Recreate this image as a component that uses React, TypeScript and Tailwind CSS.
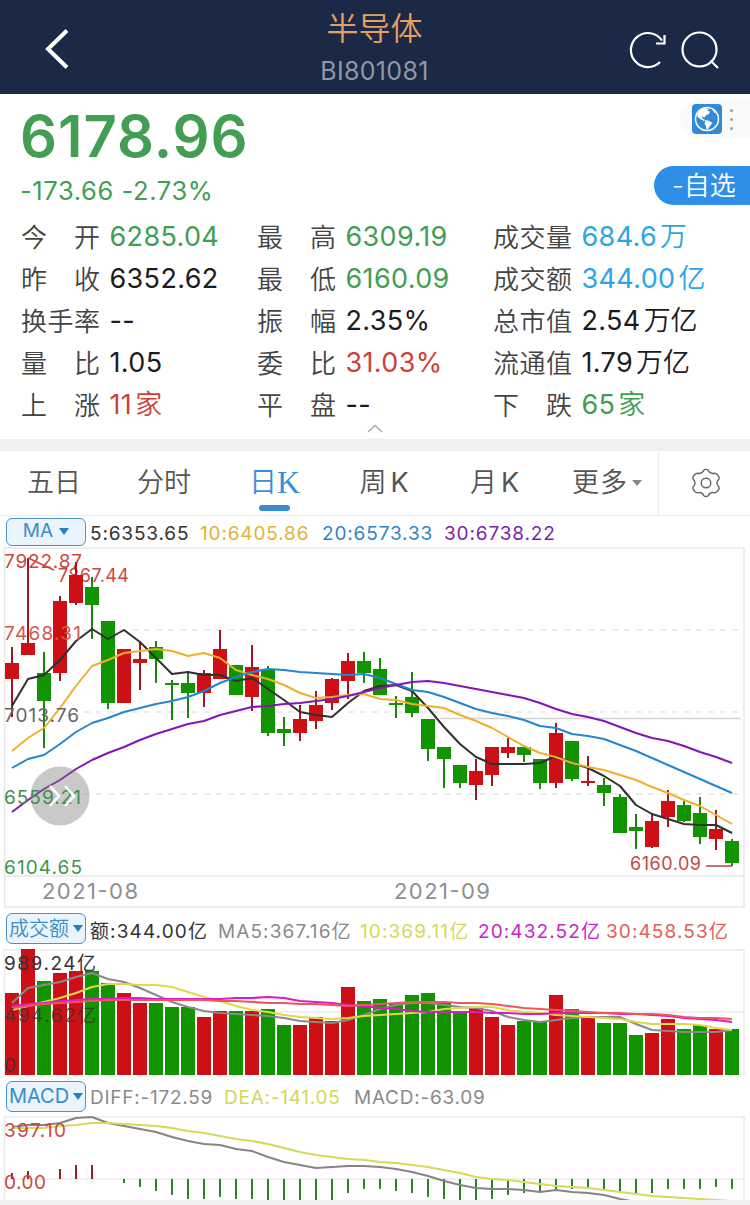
import React from 'react'

const RED = '#cd0f16'
const GREEN = '#129400'
const FONT = "Inter, 'Noto Sans CJK SC', sans-serif"

// high, body top, body bottom, low, direction (1 = up)
const candles: number[][] = [
  [647, 663, 679, 717, 1], [558, 643, 655, 655, 1], [652, 673, 701, 748, 0], [596, 601, 673, 681, 1],
  [562, 575, 603, 605, 1], [577, 587, 605, 639, 0], [621, 621, 703, 709, 0], [649, 649, 703, 703, 1],
  [641, 659, 663, 690, 1], [641, 647, 659, 683, 0], [680, 683, 685, 720, 0], [673, 683, 693, 718, 0],
  [670, 673, 693, 707, 1], [630, 649, 679, 679, 1], [665, 665, 695, 695, 0], [645, 667, 697, 711, 1],
  [666, 670, 733, 736, 0], [717, 729, 733, 746, 0], [705, 719, 733, 741, 1], [691, 705, 721, 729, 1],
  [678, 679, 703, 710, 1], [653, 661, 681, 699, 1], [652, 661, 673, 683, 0], [658, 669, 695, 695, 0],
  [696, 703, 705, 718, 0], [672, 697, 713, 717, 0], [719, 719, 749, 761, 0], [747, 747, 759, 788, 0],
  [765, 765, 783, 788, 0], [759, 771, 785, 800, 1], [747, 747, 775, 786, 1], [738, 747, 753, 758, 1],
  [746, 747, 755, 762, 0], [759, 759, 783, 789, 0], [723, 733, 783, 788, 1], [741, 741, 779, 781, 0],
  [756, 781, 783, 786, 1], [778, 785, 793, 806, 0], [794, 797, 833, 833, 0], [814, 827, 831, 849, 0],
  [814, 821, 847, 848, 1], [790, 801, 817, 827, 1], [801, 805, 821, 822, 0], [797, 813, 837, 844, 0],
  [810, 829, 839, 850, 1], [839, 841, 863, 866, 0],
]

const ma5 = [706, 679, 675, 660, 641, 629, 639, 630, 642, 658, 674, 672, 675, 675, 681, 678, 689, 700, 712, 715, 717, 703, 691, 686, 685, 691, 708, 727, 744, 757, 764, 764, 764, 763, 756, 763, 768, 776, 786, 805, 814, 819, 824, 825, 825, 833]
const ma10 = [751, 738, 728, 708, 686, 666, 660, 653, 651, 649, 651, 656, 653, 658, 670, 675, 679, 685, 693, 698, 697, 695, 694, 699, 700, 704, 706, 708, 715, 721, 728, 737, 746, 753, 757, 763, 767, 770, 775, 780, 787, 793, 800, 806, 815, 824]
const ma20 = [768, 759, 755, 744, 732, 723, 718, 712, 708, 704, 701, 697, 691, 683, 677, 672, 669, 670, 672, 673, 674, 675, 674, 678, 684, 690, 692, 697, 703, 709, 713, 716, 720, 726, 728, 734, 736, 739, 745, 751, 758, 765, 772, 779, 786, 793]
const ma30 = [812, 800, 789, 780, 769, 760, 753, 747, 740, 734, 729, 724, 721, 715, 711, 707, 706, 704, 703, 701, 699, 696, 692, 688, 685, 682, 681, 683, 686, 689, 692, 695, 698, 703, 709, 714, 717, 721, 727, 733, 738, 741, 746, 752, 757, 763]

const volume = [993, 949, 981, 973, 971, 971, 983, 993, 1003, 1003, 1007, 1007, 1017, 1011, 1011, 1011, 1009, 1025, 1025, 1017, 1021, 987, 1001, 999, 1003, 995, 993, 1003, 1011, 1007, 1017, 1025, 1021, 1021, 995, 1009, 1017, 1023, 1023, 1035, 1033, 1019, 1029, 1025, 1029, 1029]
const volUp = '1101100110001101001111000000011100101000110010'
const vol5 = [1003, 988, 985, 982, 977, 973, 979, 982, 988, 995, 1002, 1007, 1011, 1013, 1014, 1015, 1016, 1018, 1021, 1022, 1023, 1020, 1015, 1009, 1005, 1003, 1003, 1005, 1007, 1008, 1011, 1017, 1020, 1022, 1020, 1018, 1017, 1017, 1017, 1024, 1030, 1031, 1032, 1032, 1032, 1030]
const vol10 = [1010, 1006, 1002, 998, 993, 987, 984, 984, 985, 985, 987, 992, 997, 1001, 1006, 1010, 1012, 1015, 1017, 1018, 1019, 1018, 1016, 1015, 1014, 1013, 1012, 1009, 1008, 1007, 1007, 1010, 1012, 1013, 1015, 1016, 1017, 1018, 1019, 1022, 1024, 1024, 1024, 1025, 1028, 1030]
const vol20 = [1006, 1004, 1003, 1001, 1000, 999, 999, 998, 998, 999, 999, 999, 999, 999, 998, 998, 997, 998, 1001, 1002, 1003, 1005, 1006, 1008, 1009, 1011, 1012, 1012, 1012, 1012, 1013, 1013, 1014, 1014, 1013, 1013, 1013, 1013, 1014, 1014, 1015, 1016, 1018, 1019, 1020, 1022]
const vol30 = [1008, 1006, 1004, 1003, 1002, 1001, 1000, 1000, 1000, 1000, 1000, 1000, 1000, 1001, 1001, 1002, 1003, 1003, 1004, 1004, 1005, 1006, 1005, 1004, 1003, 1002, 1002, 1002, 1003, 1003, 1004, 1006, 1008, 1009, 1010, 1011, 1012, 1013, 1013, 1014, 1014, 1015, 1017, 1018, 1018, 1019]

const histogram = [1173, 1171, 1179, 1169, 1165, 1165, 1179, 1183, 1187, 1191, 1195, 1199, 1199, 1197, 1199, 1199, 1200, 1200, 1200, 1200, 1200, 1193, 1189, 1189, 1191, 1193, 1197, 1199, 1200, 1200, 1199, 1195, 1193, 1191, 1189, 1189, 1189, 1189, 1191, 1193, 1193, 1189, 1189, 1189, 1187, 1189]
const diff = [1127, 1125, 1125, 1123, 1118, 1117, 1123, 1126, 1129, 1132, 1137, 1141, 1144, 1145, 1149, 1151, 1157, 1162, 1165, 1168, 1167, 1166, 1166, 1167, 1169, 1172, 1176, 1181, 1185, 1188, 1189, 1189, 1190, 1192, 1190, 1192, 1193, 1195, 1199, 1202]
const dea = [1128, 1128, 1128, 1126, 1125, 1123, 1123, 1124, 1125, 1126, 1128, 1131, 1133, 1136, 1139, 1141, 1144, 1148, 1152, 1155, 1157, 1159, 1160, 1162, 1163, 1165, 1167, 1170, 1173, 1177, 1179, 1180, 1182, 1184, 1186, 1187, 1188, 1190, 1192, 1194, 1196, 1197, 1198, 1199, 1200, 1201]

const cx = (i: number) => 12 + i * 16

const Line = ({ data, color, width = 2 }: { data: number[]; color: string; width?: number }) => (
  <polyline
    points={data.map((y, i) => `${cx(i)},${y}`).join(' ')}
    fill="none"
    stroke={color}
    strokeWidth={width}
    strokeLinejoin="round"
  />
)

interface LabelProps {
  x: number
  y: number
  w: number
  color: string
  size?: number
  children: string
}

const Label = ({ x, y, w, color, size = 19, children }: LabelProps) => (
  <text x={x} y={y} textLength={w} fill={color} fontSize={size} fontFamily={FONT}>
    {children}
  </text>
)

interface Quote {
  label: string
  value: string
  tone: string
}

const up = 'text-[#cf3f3a]'
const down = 'text-[#429e52]'
const info = 'text-[#2ba6e2]'
const plain = 'text-[#1c1c1e]'

const quotes: Quote[] = [
  { label: '今开', value: '6285.04', tone: down },
  { label: '最高', value: '6309.19', tone: down },
  { label: '成交量', value: '684.6万', tone: info },
  { label: '昨收', value: '6352.62', tone: plain },
  { label: '最低', value: '6160.09', tone: down },
  { label: '成交额', value: '344.00亿', tone: info },
  { label: '换手率', value: '--', tone: plain },
  { label: '振幅', value: '2.35%', tone: plain },
  { label: '总市值', value: '2.54万亿', tone: plain },
  { label: '量比', value: '1.05', tone: plain },
  { label: '委比', value: '31.03%', tone: up },
  { label: '流通值', value: '1.79万亿', tone: plain },
  { label: '上涨', value: '11家', tone: up },
  { label: '平盘', value: '--', tone: plain },
  { label: '下跌', value: '65家', tone: down },
]

// CJK units sit slightly away from the digits
const Value = ({ text }: { text: string }) => {
  const [, num, unit] = text.match(/^([-\d.%]+)(.*)$/) as RegExpMatchArray
  return (
    <>
      {num}
      {unit && <span className="ml-[3px] text-[27px] font-[350] tracking-normal">{unit}</span>}
    </>
  )
}

const Header = () => (
  <header className="flex h-[94px] items-center justify-between bg-[#1c2946] pr-[30px] pl-[45px]">
    <svg width="26" height="40" viewBox="0 0 26 40" className="mt-1" fill="none" stroke="#fff" strokeWidth="4">
      <path d="M22 1.500 L3 20 L22 38.500" />
    </svg>
    <div className="flex flex-col items-center pt-0.5 pl-[50px]">
      <h1 className="text-[32px] leading-[46px] font-[350] text-[#e5a064]">半导体</h1>
      <p className="text-[25px] leading-[38px] tracking-[0.3px] text-[#8f97a8]">BI801081</p>
    </div>
    <div className="mt-2 flex items-center gap-3">
      <svg width="40" height="40" viewBox="0 0 40 40" fill="none" stroke="#fff" strokeWidth="2.200">
        <path d="M32 31 A17 17 0 1 1 34 9.500" />
        <path d="M36.500 4 V12.500 H28" />
      </svg>
      <svg width="40" height="40" viewBox="0 0 40 40" fill="none" stroke="#fff" strokeWidth="2.200">
        <circle cx="19.500" cy="18.500" r="17" />
        <path d="M30.500 29.500 L38 37" />
      </svg>
    </div>
  </header>
)

const Globe = () => (
  <svg width="30" height="30" viewBox="0 0 30 30">
    <rect width="30" height="30" rx="4" fill="#2f8bd8" />
    <circle cx="15" cy="15" r="11.500" fill="none" stroke="#fff" strokeWidth="1.500" />
    <path
      d="M5 11 L9 5 L14 4 L17 5.500 L15 7 L18 7.500 L17 10 L14.500 11 L12.500 13.500 L10.500 12.500 L10 14 L13 16 L12 17 L8 15 L6 13 Z M13.500 16 L17.500 17 L20.500 19 L18 22 L16 25 L14.500 25.500 L14 22 L12.500 19.500 Z M20 5 L24 8 L22.500 9 Z"
      fill="#fff"
    />
  </svg>
)

const Summary = () => (
  <section className="h-[345px]">
    <div className="flex h-[122px] justify-between">
      <div className="pl-5">
        <div className="mt-[7px] text-[58px] leading-[70px] font-semibold tracking-[0.9px] text-[#429e52]">6178.96</div>
        <div className="mt-[6px] text-[25.5px] leading-[28px] tracking-[0.6px] text-[#429e52]">-173.66 -2.73%</div>
      </div>
      <div className="flex flex-col items-end">
        <div className="mt-[6px] flex h-[38px] w-[70px] items-center gap-2 rounded-l-full bg-[#fafafa] pl-3">
          <Globe />
          <div className="flex flex-col gap-[6px]">
            <i className="size-[3px] rounded-full bg-gray-400" />
            <i className="size-[3px] rounded-full bg-gray-400" />
            <i className="size-[3px] rounded-full bg-gray-400" />
          </div>
        </div>
        <button className="mt-7 flex h-[39px] w-24 shrink-0 items-center rounded-l-full bg-[#2f8fe6] pl-[18px] text-[26px] font-[350] text-white">
          -自选
        </button>
      </div>
    </div>
    <div className="grid grid-cols-[236px_236px_1fr] pl-[21px]">
      {quotes.map((q) => (
        <div key={q.label} className="flex h-[42px] items-center">
          <span className="flex w-[79px] justify-between text-[26px] font-[350] text-[#444]">
            {q.label.split('').map((c) => (
              <span key={c}>{c}</span>
            ))}
          </span>
          <span className={`ml-[9.5px] text-[27px] tracking-[0.35px] whitespace-nowrap ${q.tone}`}>
            <Value text={q.value} />
          </span>
        </div>
      ))}
    </div>
    <svg width="16" height="9" viewBox="0 0 16 9" className="mx-auto -mt-0.5" fill="none" stroke="#aaa" strokeWidth="1.500">
      <path d="M1 8 L8 1.500 L15 8" />
    </svg>
  </section>
)

const Tabs = () => (
  <nav className="flex h-[65px] border-b border-[#ececec] text-[27px] font-[350] text-[#555]">
    <div className="flex w-[108px] items-center justify-center">五日</div>
    <div className="flex w-[112px] items-center justify-center">分时</div>
    <div className="flex w-[109px] flex-col items-center text-[#3b8fd9]">
      <div className="mt-2 flex h-[46px] items-center text-[28px]">
        日<span className="font-['Liberation_Serif'] text-[32px]">K</span>
      </div>
      <div className="h-1.5 w-[31px] rounded-full bg-[#3b8bd4]" />
    </div>
    <div className="flex w-[110px] items-center justify-center gap-1">周<span className="font-normal">K</span></div>
    <div className="flex w-[111px] items-center justify-center gap-1">月<span className="font-normal">K</span></div>
    <div className="flex w-[109px] items-center justify-center gap-2 border-r border-[#ececec] pl-1.5">
      <span className="tracking-[1px]">更多</span>
      <svg width="10" height="6" viewBox="0 0 10 6" fill="#888" className="-ml-1">
        <path d="M0 0 H10 L5 6 Z" />
      </svg>
    </div>
    <div className="flex flex-1 items-center justify-center pl-0.5">
      <svg width="30" height="30" viewBox="0 0 30 30" fill="none" stroke="#666" strokeWidth="1.400" strokeLinejoin="round">
        <circle cx="15" cy="15" r="4.800" />
        <path d="M12.600 2.600 Q15 .2 17.400 2.600 C18.500 5.200 20 6 23.500 5.300 Q26.500 5.500 28.200 9.500 Q28.300 11.300 26.500 12.800 Q25.300 15 26.500 17.200 Q28.300 18.700 28.200 20.500 Q26.500 24.500 23.500 24.700 C20 24 18.500 24.800 17.400 27.400 Q15 29.800 12.600 27.400 C11.500 24.800 10 24 6.500 24.700 Q3.500 24.500 1.800 20.500 Q1.700 18.700 3.500 17.200 Q4.700 15 3.500 12.800 Q1.700 11.300 1.800 9.500 Q3.500 5.500 6.500 5.300 C10 6 11.500 5.200 12.600 2.600 Z" />
      </svg>
    </div>
  </nav>
)

const Chip = ({ text, className }: { text: string; className: string }) => (
  <button
    className={`flex w-20 shrink-0 items-center justify-center rounded-md border-[1.5px] border-[#4b92c8] bg-[#eaf4fd] text-[#3a8cc8] ${className}`}
  >
    {text}
    <svg width="10" height="7" viewBox="0 0 10 7" fill="#1f83c6">
      <path d="M0 0 H10 L5 7 Z" />
    </svg>
  </button>
)

const PriceChart = () => (
  <svg width="750" height="361" viewBox="0 547 750 361" className="block">
    <g fill="none" stroke="#e6e8ea" strokeWidth="1.500">
      <path d="M4.500 548 H744 V907 H4.500 Z M4.500 876 H744" />
      <path d="M84 630 H744 M84 712 H744 M84 794 H744" strokeDasharray="6 6" />
      <path d="M440 718.500 H741" stroke="#d4d4d4" />
    </g>
    <Label x={4} y={568} w={78} color="#cf453f">7922.87</Label>
    <Label x={58} y={582} w={71} color="#cf453f" size={18}>7867.44</Label>
    {candles.map(([high, top, bottom, low, isUp], i) => (
      <g key={i} fill={isUp ? RED : GREEN}>
        <rect x={cx(i) - 1} y={high} width="2" height={low - high} fill={isUp ? '#a3161f' : '#1c8410'} />
        <rect x={cx(i) - 7} y={top} width="14" height={bottom - top} />
      </g>
    ))}
    <path d="M28 558 L54 570" stroke="#cf453f" strokeWidth="1.500" />
    <path d="M706 866 H732" stroke="#b9423e" strokeWidth="1.500" />
    <Line data={ma5} color="#303030" />
    <Line data={ma10} color="#edb02c" />
    <Line data={ma20} color="#2386cf" />
    <Line data={ma30} color="#8416b8" />
    <Label x={4} y={640} w={77} color="#d9534c">7468.31</Label>
    <Label x={4} y={722} w={75} color="#666">7013.76</Label>
    <circle cx="60" cy="796" r="29.500" fill="#777" fillOpacity="0.4" />
    <Label x={4} y={804} w={77} color="#3f8f4c">6559.21</Label>
    <path d="M50 786 L59 796 L50 806 M65 786 L74 796 L65 806" fill="none" stroke="#fff" strokeWidth="2.500" />
    <Label x={4} y={874} w={78} color="#3f9550">6104.65</Label>
    <Label x={630} y={870} w={71} color="#c14b45" size={18}>6160.09</Label>
    <Label x={42} y={899} w={96} color="#8f8f8f" size={22}>2021-08</Label>
    <Label x={394} y={899} w={96} color="#8f8f8f" size={22}>2021-09</Label>
  </svg>
)

const VolumeChart = () => (
  <svg width="750" height="127" viewBox="0 949 750 127" className="block">
    <path d="M4.500 1075 V950 H744 V1075 M4.500 1012 H744" fill="none" stroke="#ebebeb" strokeWidth="1.500" />
    {volume.map((y, i) => (
      <rect key={i} x={cx(i) - 7} y={y} width="14" height={1075 - y} fill={volUp[i] === '1' ? RED : GREEN} />
    ))}
    <Line data={vol5} color="#8a8a8a" />
    <Line data={vol10} color="#dfd94a" />
    <Line data={vol20} color="#dd1bc4" />
    <Line data={vol30} color="#ee5560" />
    <Label x={4} y={970} w={92} color="#333">989.24亿</Label>
    <Label x={4} y={1022} w={92} color="#333333c0">494.62亿</Label>
    <Label x={4} y={1072} w={12} color="#333333d0">0</Label>
  </svg>
)

const MacdChart = () => (
  <svg width="750" height="84" viewBox="0 1116 750 84" className="block">
    <path d="M4.500 1200 V1117 H744 V1200 M4.500 1179 H744" fill="none" stroke="#ebebeb" strokeWidth="1.500" />
    {histogram.map((y, i) => (
      <rect
        key={i}
        x={cx(i) - 1}
        y={Math.min(y, 1179)}
        width="2"
        height={Math.abs(y - 1179)}
        fill={y < 1179 ? '#94202a' : '#2f7f2a'}
      />
    ))}
    <Line data={diff} color="#858585" />
    <Line data={dea} color="#d6d95a" />
    <Label x={4} y={1137} w={62} color="#cf453f">397.10</Label>
    <Label x={4} y={1189} w={42} color="#cf453f">0.00</Label>
  </svg>
)

export default function App() {
  return (
    <main className="h-[1205px] w-[750px] overflow-hidden bg-white font-[Inter,'Noto_Sans_CJK_SC',sans-serif]">
      <Header />
      <Summary />
      <div className="h-3 bg-[#efefef]" />
      <Tabs />

      <div className="flex h-[31px] items-center pl-1.5 text-[19px] tracking-[0.85px] whitespace-nowrap">
        <Chip text="MA" className="h-7 gap-1.5 text-[19px] tracking-normal" />
        <span className="ml-1 w-[110px] pt-[5px] text-[#333]">5:6353.65</span>
        <span className="w-[122px] pt-[5px] text-[#e3b23a]">10:6405.86</span>
        <span className="w-[122px] pt-[5px] text-[#2f86c4]">20:6573.33</span>
        <span className="pt-[5px] text-[#7a1fb0]">30:6738.22</span>
      </div>
      <PriceChart />

      <div className="flex h-[41px] items-center pl-1.5 text-[19px] tracking-[1.1px] whitespace-nowrap">
        <Chip text="成交额" className="h-[31px] gap-1 text-[20px] font-[350] tracking-normal" />
        <span className="ml-1 w-[128px] pt-2 text-[#333]">额:344.00亿</span>
        <span className="w-[142px] pt-2 text-[#8a8a8a]">MA5:367.16亿</span>
        <span className="w-[118px] pt-2 text-[#d6d95a]">10:369.11亿</span>
        <span className="w-[128px] pt-2 text-[#c624c9]">20:432.52亿</span>
        <span className="pt-2 text-[#e0605c]">30:458.53亿</span>
      </div>
      <VolumeChart />

      <div className="flex h-10 items-center pl-1.5 text-[19px] tracking-[0.75px] whitespace-nowrap">
        <Chip text="MACD" className="h-[31px] gap-1 text-[20px] tracking-normal" />
        <span className="ml-1 w-[134px] pt-[5px] text-[#8a8a8a]">DIFF:-172.59</span>
        <span className="w-[130px] pt-[5px] text-[#d3d75c]">DEA:-141.05</span>
        <span className="pt-[5px] text-[#8a8a8a]">MACD:-63.09</span>
      </div>
      <MacdChart />
      <div className="h-[5px] bg-[#efefef]" />
    </main>
  )
}
